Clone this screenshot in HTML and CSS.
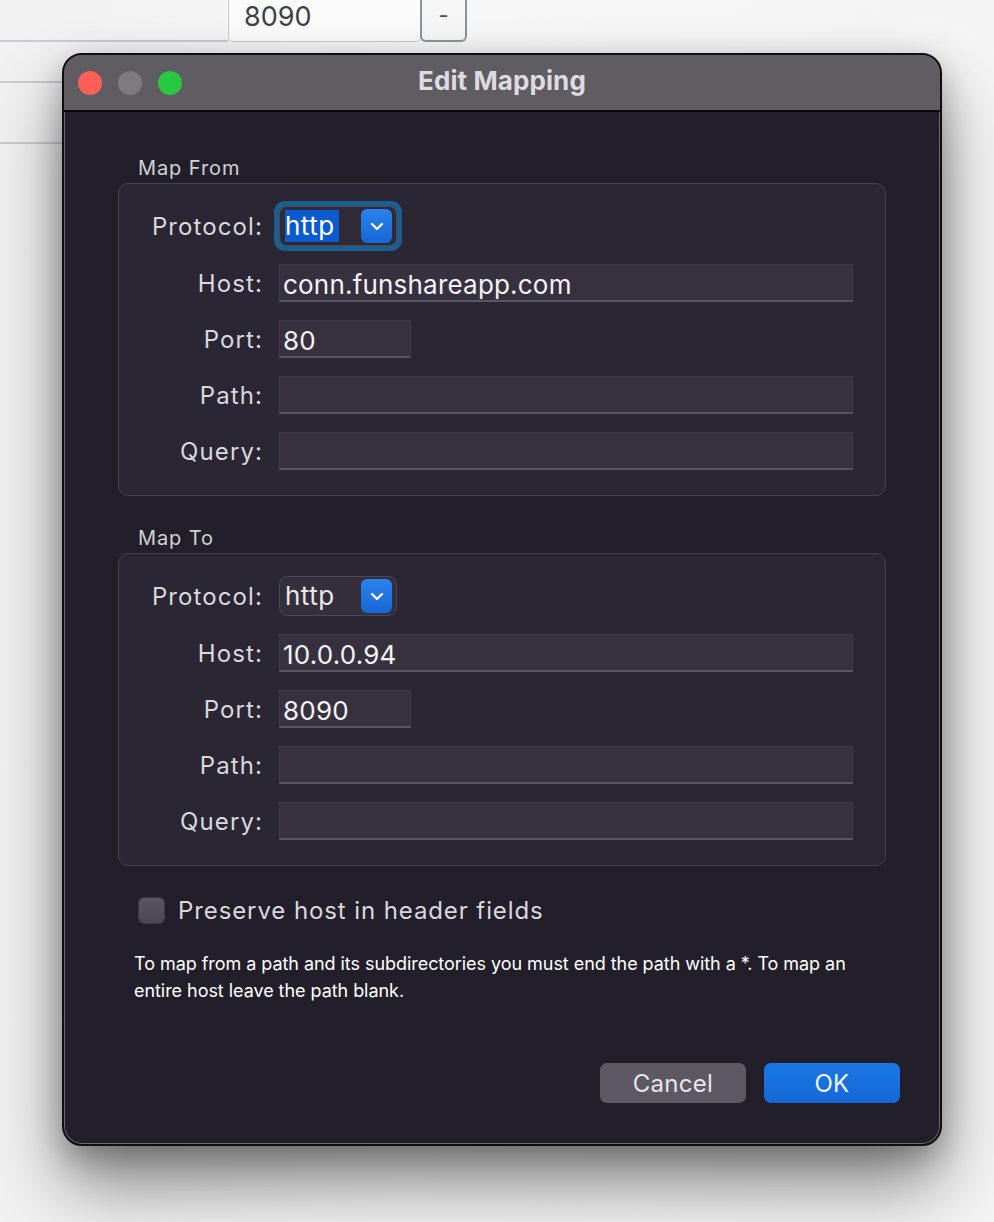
FILE: index.html
```html
<!DOCTYPE html>
<html>
<head>
<meta charset="utf-8">
<link rel="stylesheet" href="styles.css">
</head>
<body>
<div class="backdrop">
  <div class="bg-row bg-row-top">
    <div class="bg-cell bg-cell-blank"></div>
    <div class="bg-field">8090</div>
    <div class="bg-stepper">-</div>
  </div>
  <div class="bg-row bg-row-2"></div>
  <div class="bg-row bg-row-3"></div>
</div>

<div class="dialog">
  <div class="titlebar">
    <div class="lights">
      <span class="light light-red"></span>
      <span class="light light-gray"></span>
      <span class="light light-green"></span>
    </div>
    <div class="title">Edit Mapping</div>
  </div>
  <div class="dialog-body">
    <div class="section-label">Map From</div>
    <div class="group">
      <div class="label">Protocol:</div>
      <div class="popup-wrap focused">
        <div class="popup">
          <span class="popup-value selected">http</span>
          <span class="popup-arrow"><svg width="14" height="9" viewBox="0 0 14 9"><path d="M2 2 L7 7 L12 2" fill="none" stroke="#fff" stroke-width="2.4" stroke-linecap="round" stroke-linejoin="round"/></svg></span>
        </div>
      </div>
      <div class="label">Host:</div>
      <div class="field wide">conn.funshareapp.com</div>
      <div class="label">Port:</div>
      <div class="field short">80</div>
      <div class="label">Path:</div>
      <div class="field wide"></div>
      <div class="label">Query:</div>
      <div class="field wide"></div>
    </div>

    <div class="section-label second">Map To</div>
    <div class="group">
      <div class="label">Protocol:</div>
      <div class="popup-wrap">
        <div class="popup">
          <span class="popup-value">http</span>
          <span class="popup-arrow"><svg width="14" height="9" viewBox="0 0 14 9"><path d="M2 2 L7 7 L12 2" fill="none" stroke="#fff" stroke-width="2.4" stroke-linecap="round" stroke-linejoin="round"/></svg></span>
        </div>
      </div>
      <div class="label">Host:</div>
      <div class="field wide">10.0.0.94</div>
      <div class="label">Port:</div>
      <div class="field short">8090</div>
      <div class="label">Path:</div>
      <div class="field wide"></div>
      <div class="label">Query:</div>
      <div class="field wide"></div>
    </div>

    <label class="check-row">
      <span class="checkbox"></span>
      <span class="check-label">Preserve host in header fields</span>
    </label>

    <p class="note">To map from a path and its subdirectories you must end the path with a *. To map an<br>entire host leave the path blank.</p>

    <div class="buttons">
      <button class="btn btn-cancel">Cancel</button>
      <button class="btn btn-ok">OK</button>
    </div>
  </div>
</div>
</body>
</html>
```

FILE: styles.css
```css
* { box-sizing: border-box; }

html, body {
  margin: 0;
  padding: 0;
}

body {
  width: 994px;
  height: 1222px;
  overflow: hidden;
  background: linear-gradient(90deg, #f1f1f2 0%, #f7f7f7 40%, #f4f4f4 100%);
  font-family: Inter, "Noto Sans", "Liberation Sans", sans-serif;
  position: relative;
}

/* background content */
.backdrop {
  display: flex;
  flex-direction: column;
}

.bg-row {
  display: flex;
  border-bottom: 2px solid #c9ccd1;
}

.bg-row-top {
  height: 42px;
  border-bottom: none;
}

.bg-cell-blank {
  width: 228px;
  border-bottom: 2px solid #c9ccd1;
}

.bg-field {
  width: 193px;
  height: 42px;
  border: 1px solid #c9ccd1;
  border-top: none;
  border-radius: 0 0 5px 5px;
  background: #fbfbfb;
  color: #3d424a;
  font-size: 27px;
  line-height: 33px;
  padding-left: 15px;
}

.bg-stepper {
  width: 47px;
  height: 42px;
  border: 2px solid #8f949b;
  border-top: none;
  border-radius: 0 0 6px 6px;
  background: #f6f6f6;
  color: #4a4f57;
  font-size: 22px;
  line-height: 30px;
  text-align: center;
  margin-left: -1px;
}

.bg-row-2 {
  height: 41px;
  width: 120px;
}

.bg-row-3 {
  height: 61px;
  width: 120px;
}

/* dialog */
.dialog {
  position: absolute;
  left: 62px;
  top: 53px;
  width: 880px;
  height: 1093px;
  border-radius: 20px;
  background: #231f2a;
  border: 2px solid #0f0e12;
  box-shadow:
    inset 0 0 0 1px #6c6870,
    0 40px 70px rgba(0, 0, 0, 0.45),
    0 10px 30px rgba(0, 0, 0, 0.25);
  overflow: hidden;
  display: flex;
  flex-direction: column;
}

.titlebar {
  height: 57px;
  flex: none;
  background: #5f5c62;
  border-bottom: 2px solid #09080b;
  display: flex;
  align-items: center;
  position: relative;
}

.lights {
  display: flex;
  gap: 16px;
  padding-left: 14px;
  padding-top: 1px;
}

.light {
  width: 24px;
  height: 24px;
  border-radius: 50%;
  display: block;
}

.light-red { background: #fe5f57; }
.light-gray { background: #7d7a80; }
.light-green { background: #28c840; }

.title {
  position: absolute;
  left: 0;
  right: 0;
  top: 0;
  bottom: 0;
  display: flex;
  align-items: center;
  justify-content: center;
  color: #dddbe0;
  font-weight: 700;
  font-size: 26px;
  letter-spacing: 0.1px;
  padding-bottom: 5px;
}

.dialog-body {
  flex: 1;
  display: flex;
  flex-direction: column;
  padding: 44px 40px 0 54px;
}

.section-label {
  color: #d2d0d5;
  font-size: 20px;
  line-height: 24px;
  padding-left: 20px;
  margin-bottom: 3px;
  letter-spacing: 0.9px;
}

.section-label.second {
  margin-top: 30px;
}

.group {
  width: 768px;
  background: #2b2633;
  border: 1.5px solid #45414b;
  border-radius: 10px;
  display: grid;
  grid-template-columns: 143px auto;
  column-gap: 17px;
  row-gap: 18px;
  grid-template-rows: 40px 38px 38px 38px 38px;
  padding: 22px 0 25px 0;
  justify-items: start;
  align-items: center;
}

.label {
  justify-self: end;
  color: #dad8dd;
  font-size: 24px;
  letter-spacing: 1.1px;
  margin-right: -1px;
}

.field {
  height: 38px;
  background: #37313f;
  border: 1px solid #403b47;
  border-bottom: 2px solid #5a5661;
  color: #f4f3f6;
  font-size: 26px;
  line-height: 34px;
  padding: 3px 0 0 3px;
  letter-spacing: 0.2px;
}

.field.wide { width: 574px; }
.field.short { width: 132px; }

.popup-wrap {
  border-radius: 11px;
  padding: 5px;
  margin-left: -5px;
}

.popup-wrap.focused {
  background: #1e5d90;
}

.popup {
  width: 118px;
  height: 40px;
  border-radius: 8px;
  background: #342f3b;
  border: 1.5px solid #4b4751;
  display: flex;
  align-items: center;
  justify-content: space-between;
  padding: 0 4px 0 5px;
}

.popup-wrap.focused .popup {
  background: #2f2a36;
}

.popup-value {
  color: #e8e7ea;
  font-size: 26px;
  line-height: 32px;
  padding: 0 2px 0 0;
  letter-spacing: 0.5px;
}

.popup-value.selected {
  background: #0a5ad0;
  color: #ffffff;
  padding-right: 2px;
  width: 54px;
}

.popup-arrow {
  width: 31px;
  height: 34px;
  border-radius: 6px;
  background: linear-gradient(#2a83ec, #1767d6);
  display: flex;
  align-items: center;
  justify-content: center;
}

.check-row {
  display: flex;
  align-items: center;
  gap: 13px;
  margin-top: 30px;
  padding-left: 20px;
}

.checkbox {
  width: 27px;
  height: 27px;
  border-radius: 6px;
  background: linear-gradient(#5a5660, #4b4751);
  border: 1px solid #3c3842;
  display: block;
}

.check-label {
  color: #dad8dd;
  font-size: 24px;
  letter-spacing: 0.9px;
}

.note {
  margin: 25px 0 0 16px;
  color: #ffffff;
  font-size: 18px;
  line-height: 27px;
  letter-spacing: -0.05px;
}

.buttons {
  display: flex;
  justify-content: flex-end;
  gap: 18px;
  margin-top: auto;
  margin-bottom: 41px;
  padding-right: 0;
}

.btn {
  height: 40px;
  border: none;
  border-radius: 7px;
  font-family: Inter, "Noto Sans", "Liberation Sans", sans-serif;
  font-size: 24px;
  padding: 0;
  letter-spacing: 0.3px;
}

.btn-cancel {
  width: 146px;
  background: #5d5963;
  color: #e7e5ea;
}

.btn-ok {
  width: 136px;
  background: linear-gradient(#1b78e6, #1568d8);
  color: #f2f6fc;
}
```
